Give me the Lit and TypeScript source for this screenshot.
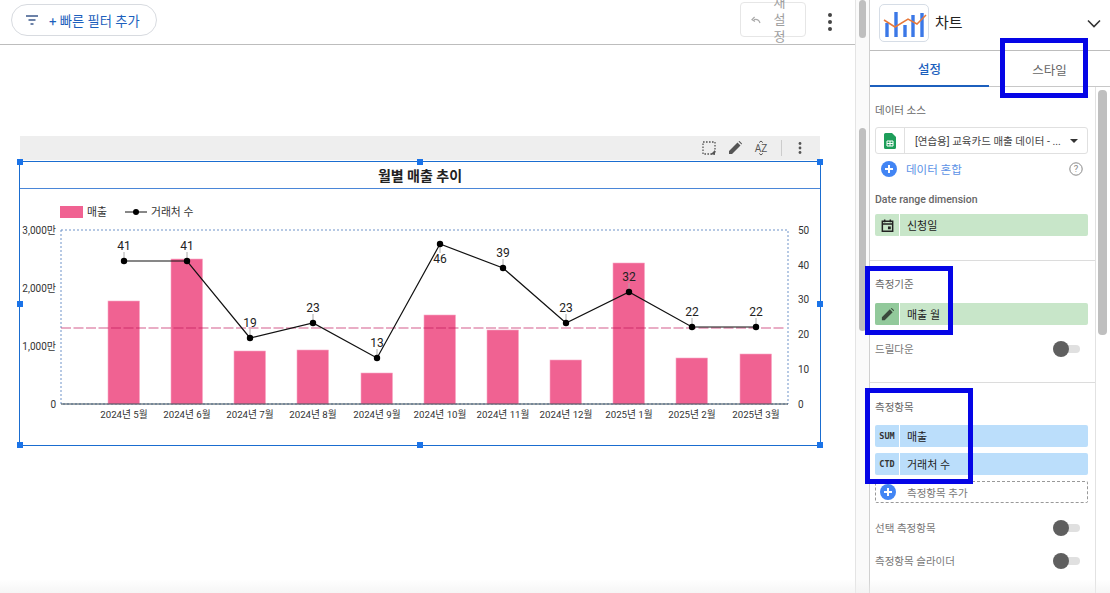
import { LitElement, html, css, svg } from "lit";
import { customElement } from "lit/decorators.js";

const xs = [124, 187, 250, 313, 377, 440, 503, 566, 629, 692, 756];
const tops = [301, 259, 351, 350, 373, 315, 330, 360, 263, 358, 354];
const ys = [261, 261, 338, 323, 358, 244, 268, 323, 292, 327, 327];
const vals = [41, 41, 19, 23, 13, 46, 39, 23, 32, 22, 22];
const months = ["2024년 5월", "2024년 6월", "2024년 7월", "2024년 8월", "2024년 9월", "2024년 10월", "2024년 11월", "2024년 12월", "2025년 1월", "2025년 2월", "2025년 3월"];
const handles = [[0, 0], [50, 0], [100, 0], [0, 50], [100, 50], [0, 100], [50, 100], [100, 100]];

const toggle = html`<span class="toggle"><span class="knob"></span></span>`;

const plus = html`<svg class="plus" viewBox="0 0 16 16"><circle cx="8" cy="8" r="8" fill="#4285f4"></circle><path d="M8 4v8M4 8h8" stroke="#fff" stroke-width="2"></path></svg>`;

@customElement("app-root")
export class AppRoot extends LitElement {
  static styles = css`
    :host { display: block; width: 1110px; height: 593px; overflow: hidden; position: relative; background: #fff;
      font-family: Roboto, "Noto Sans CJK KR", sans-serif; color: #333; }
    .app { display: grid; grid-template-columns: 855px 14px 241px; height: 593px; }
    .main { display: flex; flex-direction: column; min-width: 0; }
    .topbar { height: 44px; box-sizing: content-box; border-bottom: 1px solid #bdbdbd; display: flex; align-items: flex-start; padding-left: 11px; }
    .filter { margin-top: 4px; width: 146px; height: 32px; box-sizing: border-box; border: 1px solid #d8dbe0; border-radius: 16px; display: flex; align-items: center; padding-left: 13px; gap: 10px; color: #1c5fbd; font-size: 13.3px; white-space: nowrap; }
    .filter svg { width: 14px; height: 12px; flex: none; }
    .reset { margin-left: 583px; margin-top: 2px; width: 66px; height: 35px; box-sizing: border-box; border: 1px solid #e6e6e6; border-radius: 4px; display: flex; align-items: center; padding-left: 10px; gap: 12px; color: #9e9e9e; font-size: 13px; line-height: 17px; }
    .reset svg { width: 10px; height: 8px; flex: none; }
    .reset .t { width: 13px; text-align: center; word-break: break-all; }
    .dots { width: 4px; margin-left: 22px; margin-top: 13px; display: flex; flex-direction: column; gap: 3px; }
    .dots i { width: 4px; height: 4px; border-radius: 50%; background: #444; }
    .canvas { flex: 1; padding: 91px 0 0 19px; }
    .tools { margin-left: 1px; width: 800px; height: 24px; box-sizing: border-box; padding-right: 7px; background: #eeeeee; display: flex; align-items: center; justify-content: flex-end; color: #555; }
    .tools .ic { width: 26px; height: 24px; display: flex; align-items: center; justify-content: center; }
    .tools svg { width: 16px; height: 16px; }
    .tools .sep { width: 1px; height: 16px; background: #ccc; margin: 0 5px 0 7px; }
    .chart { position: relative; margin-top: 1px; width: 802px; height: 285px; box-sizing: border-box; border: 1px solid #1a6dd0; }
    .title { height: 27px; box-sizing: border-box; border-bottom: 1px solid #4a86d8; display: flex; align-items: center; justify-content: center; font-size: 14px; font-weight: 700; color: #222; }
    .chart > svg { display: block; width: 800px; height: 256px; }
    .h { position: absolute; width: 6px; height: 6px; background: #1a73e8; transform: translate(-50%, -50%); }
    .gutter { border-left: 1px solid #e4e4e4; background: #fafafa; position: relative; display: flex; flex-direction: column; }
    .thumb { position: absolute; left: 3px; width: 7px; background: #bfbfbf; border-radius: 4px; }
    .t1 { top: 0; height: 38px; }
    .t2 { top: 128px; height: 203px; }
    .panel { border-left: 1px solid #d0d0d0; display: flex; flex-direction: column; min-width: 0; height: 593px; }
    .head { height: 51px; flex: none; box-sizing: border-box; border-bottom: 1px solid #bdbdbd; display: flex; align-items: flex-start; padding: 4px 0 0 9px; }
    .logo { width: 50px; height: 38px; box-sizing: border-box; border: 1px solid #d6dde6; border-radius: 5px; flex: none; }
    .logo svg { display: block; width: 48px; height: 36px; }
    .name { margin-left: 6px; margin-top: 7px; font-size: 15px; color: #222; }
    .chev { margin-left: auto; margin-right: 9px; margin-top: 15px; width: 14px; height: 9px; }
    .tabs { height: 36px; flex: none; box-sizing: border-box; display: grid; grid-template-columns: 119px 1fr; border-bottom: 1px solid #c8c8c8; font-size: 12.5px; }
    .tab { display: flex; align-items: center; justify-content: center; color: #666; }
    .tab.on { color: #1c5fbd; border-bottom: 2px solid #1c5fbd; height: 36px; box-sizing: border-box; font-weight: 500; }
    .scroll { flex: 1; display: grid; grid-template-columns: 226px 1fr; min-height: 0; }
    .body { border-right: 1px solid #e2e2e2; min-width: 0; }
    .rail { position: relative; }
    .rail .thumb { left: 2px; top: 3px; width: 9px; height: 245px; }
    .sec { padding: 0 7px 0 5px; border-bottom: 1px solid #dcdcdc; box-sizing: border-box; }
    .s1 { height: 174px; padding-top: 16px; }
    .s2 { height: 122px; padding-top: 16px; }
    .s3 { border-bottom: 0; padding-top: 17px; }
    .lbl { font-size: 10.5px; line-height: 16px; color: #666; }
    .lbl.en { font-weight: 500; margin-top: 15px; }
    .select { margin-top: 8px; height: 27px; box-sizing: border-box; border: 1px solid #e0e0e0; border-radius: 3px; display: grid; grid-template-columns: 29px 1fr 17px; align-items: center; font-size: 10.5px; color: #444; }
    .sheet { height: 25px; border-right: 1px solid #e0e0e0; display: flex; align-items: center; justify-content: center; }
    .sheet svg { width: 12px; height: 16px; }
    .select .tx { padding-left: 10px; white-space: nowrap; overflow: hidden; }
    .caret { width: 0; height: 0; border-left: 4px solid transparent; border-right: 4px solid transparent; border-top: 4px solid #333; }
    .blend { margin-top: 7px; height: 16px; display: flex; align-items: center; padding-left: 6px; gap: 9px; color: #5c92e6; font-size: 11.5px; }
    .plus { width: 16px; height: 16px; flex: none; }
    .help { margin-left: auto; margin-right: 5px; width: 14px; height: 14px; }
    .chip { height: 22px; display: grid; grid-template-columns: 25px 1fr; border-radius: 2px; overflow: hidden; font-size: 11px; color: #222; align-items: stretch; }
    .chip > span { display: flex; align-items: center; }
    .chip .k { justify-content: center; border-right: 1px solid #fff; }
    .chip .v { padding-left: 7px; }
    .green { background: #c8e6c9; }
    .blue { background: #bbdefb; }
    .k.dark { background: #92c99b; }
    .k svg { width: 15px; height: 15px; }
    .mono { font-family: "DejaVu Sans Mono", monospace; font-size: 8.5px; font-weight: 700; color: #333; }
    .mt6 { margin-top: 6px; }
    .mt9 { margin-top: 9px; }
    .mt10 { margin-top: 10px; }
    .row { display: flex; align-items: center; justify-content: space-between; font-size: 10.5px; color: #777; }
    .r0 { margin-top: 16px; }
    .r1 { margin-top: 17px; }
    .r2 { margin-top: 18px; }
    .toggle { position: relative; width: 27px; height: 8px; background: #e0e0e0; border-radius: 4px; margin-right: 8px; display: block; }
    .knob { position: absolute; left: 0; top: -4px; width: 16px; height: 16px; border-radius: 50%; background: #5f5f5f; }
    .add { margin-top: 6px; height: 22px; box-sizing: border-box; border: 1px dashed #999; border-radius: 2px; display: flex; align-items: center; padding-left: 4px; gap: 11px; font-size: 10.5px; color: #777; }
    .mark { position: absolute; box-sizing: border-box; border: 5px solid #0505e6; pointer-events: none; }
    .fade { position: absolute; left: 0; right: 0; bottom: 0; height: 14px; background: linear-gradient(to bottom, rgba(240,240,240,0), rgba(238,238,238,.55)); pointer-events: none; }
  `;

  private plot() {
    const lbl = `font-family: Roboto, 'Noto Sans CJK KR', sans-serif`;
    return svg`
      <rect x="60" y="206" width="23" height="12" fill="#f06292"></rect>
      <text x="87" y="216" font-size="10.8" fill="#333" style=${lbl}>매출</text>
      <line x1="125" y1="212" x2="147" y2="212" stroke="#111"></line>
      <circle cx="136" cy="212" r="3" fill="#000"></circle>
      <text x="151" y="216" font-size="10.8" fill="#333" style=${lbl}>거래처 수</text>
      <rect x="61" y="230" width="727" height="174" fill="none" stroke="#6f93c9" stroke-dasharray="2 2"></rect>
      ${xs.map((x, i) => svg`<rect x=${x - 16} y=${tops[i]} width="31.5" height=${404 - tops[i]} fill="#f06292" stroke="#f8a9c5" stroke-width=".6"></rect>`)}
      <line x1="61" y1="404" x2="788" y2="404" stroke="#37474f" stroke-width="1"></line>
      <line x1="61" y1="328" x2="786" y2="328" stroke="#c2185b" stroke-opacity=".7" stroke-dasharray="10 2.5" stroke-width="1.2"></line>
      ${[["3,000만", 230], ["2,000만", 288], ["1,000만", 346], ["0", 404]].map(([t, y]) => svg`<text x="56" y=${(y as number) + 3.5} text-anchor="end" font-size="10" fill="#333" style=${lbl}>${t}</text>`)}
      ${[[50, 230], [40, 265], [30, 299], [20, 334], [10, 369], [0, 404]].map(([t, y]) => svg`<text x="798" y=${y + 3.5} font-size="10" fill="#333" style=${lbl}>${t}</text>`)}
      ${xs.map((x, i) => svg`<text x=${x} y="418" text-anchor="middle" font-size="9.7" fill="#333" style=${lbl}>${months[i]}</text>`)}
      ${vals.map((v, i) => i === 5
        ? svg`<line x1=${xs[i]} y1=${ys[i]} x2=${xs[i]} y2=${ys[i] + 9} stroke="#aaa"></line>
              <text x=${xs[i]} y=${ys[i] + 19} text-anchor="middle" font-size="12" fill="#222" style=${lbl}>${v}</text>`
        : svg`<line x1=${xs[i]} y1=${ys[i]} x2=${xs[i]} y2=${ys[i] - 9} stroke="#aaa"></line>
              <text x=${xs[i]} y=${ys[i] - 11} text-anchor="middle" font-size="12" fill="#222" style=${lbl}>${v}</text>`)}
      <polyline points=${xs.map((x, i) => `${x},${ys[i]}`).join(" ")} fill="none" stroke="#111" stroke-width="1.2"></polyline>
      ${xs.map((x, i) => svg`<circle cx=${x} cy=${ys[i]} r="3.2" fill="#000"></circle>`)}
    `;
  }

  render() {
    return html`
      <div class="app">
        <div class="main">
          <div class="topbar">
            <div class="filter">
              <svg viewBox="0 0 14 12"><path d="M1 2h12M3.5 6h7M5.5 10h3" stroke="#3c5a8c" stroke-width="1.5"></path></svg>
              <span>+ 빠른 필터 추가</span>
            </div>
            <div class="reset">
              <svg viewBox="0 0 10 8"><path d="M9 7C8 4 5.5 3 3 3.6M3.6 1L1 3.6l3 2" fill="none" stroke="#aaa" stroke-width="1.2"></path></svg>
              <span class="t">재설정</span>
            </div>
            <div class="dots"><i></i><i></i><i></i></div>
          </div>
          <div class="canvas">
            <div class="tools">
              <span class="ic"><svg viewBox="0 0 16 16"><path d="M2 2h12v12H2z" fill="none" stroke="#555" stroke-width="1.3" stroke-dasharray="1.6 1.4"></path><path d="M9.5 14.5l4.5-4.5v4.5z" fill="#555"></path></svg></span>
              <span class="ic"><svg viewBox="0 0 16 16"><path d="M2 14v-3L10.5 2.5l3 3L5 14zM11.5 1.5l1-.5 2.5 2.5-.5 1z" fill="#555"></path></svg></span>
              <span class="ic"><svg viewBox="0 0 16 16"><path d="M6.2 2.6L8 1l1.8 1.6M6.2 13.4L8 15l1.8-1.6" fill="none" stroke="#555" stroke-width="1"></path><text x="8" y="11.6" text-anchor="middle" font-size="10" fill="#555" font-family="Roboto, sans-serif">AZ</text></svg></span>
              <span class="sep"></span>
              <span class="ic"><svg viewBox="0 0 16 16"><circle cx="8" cy="3.5" r="1.4" fill="#555"></circle><circle cx="8" cy="8" r="1.4" fill="#555"></circle><circle cx="8" cy="12.5" r="1.4" fill="#555"></circle></svg></span>
            </div>
            <div class="chart">
              <div class="title">월별 매출 추이</div>
              <svg viewBox="20 189 800 256">${this.plot()}</svg>
              ${handles.map(([l, t]) => html`<span class="h" style="left:${l}%;top:${t}%"></span>`)}
            </div>
          </div>
        </div>
        <div class="gutter"><span class="thumb t1"></span><span class="thumb t2"></span></div>
        <div class="panel">
          <div class="head">
            <div class="logo">
              <svg viewBox="0 0 48 36">
                <path d="M7 32V18M16 32V7M25 32V20M33 32V10M42 32V8" stroke="#3b78e7" stroke-width="3.4"></path>
                <path d="M4 15l11 7 13-8 9 5 9-9" fill="none" stroke="#e8793a" stroke-width="1.5"></path>
              </svg>
            </div>
            <span class="name">차트</span>
            <svg class="chev" viewBox="0 0 14 9"><path d="M1 1.5l6 6 6-6" fill="none" stroke="#333" stroke-width="1.6"></path></svg>
          </div>
          <div class="tabs"><span class="tab on">설정</span><span class="tab">스타일</span></div>
          <div class="scroll">
            <div class="body">
              <div class="sec s1">
                <div class="lbl">데이터 소스</div>
                <div class="select">
                  <span class="sheet"><svg viewBox="0 0 12 16"><path d="M0 1.5A1.5 1.5 0 0 1 1.5 0H8l4 4v10.5a1.5 1.5 0 0 1-1.5 1.5h-9A1.5 1.5 0 0 1 0 14.5z" fill="#1e9e5a"></path><path d="M3 8h6v5H3zM3 10.5h6M6 8v5" fill="none" stroke="#fff"></path></svg></span>
                  <span class="tx">[연습용] 교육카드 매출 데이터 - ...</span>
                  <span class="caret"></span>
                </div>
                <div class="blend">${plus}<span>데이터 혼합</span>
                  <svg class="help" viewBox="0 0 14 14"><circle cx="7" cy="7" r="6.2" fill="none" stroke="#888"></circle><text x="7" y="10.4" text-anchor="middle" font-size="9.5" fill="#888" font-family="Roboto, sans-serif">?</text></svg>
                </div>
                <div class="lbl en">Date range dimension</div>
                <div class="chip green mt6"><span class="k"><svg viewBox="0 0 16 16"><path d="M2.5 3.5h11v10.5h-11zM2.5 6.5h11M5 1.5v3M11 1.5v3" fill="none" stroke="#222" stroke-width="1.6"></path><rect x="8.5" y="9" width="3" height="3" fill="#222"></rect></svg></span><span class="v">신청일</span></div>
              </div>
              <div class="sec s2">
                <div class="lbl">측정기준</div>
                <div class="chip green mt10"><span class="k dark"><svg viewBox="0 0 16 16"><path d="M2 14v-3L10.5 2.5l3 3L5 14zM11.5 1.5l1-.5 2.5 2.5-.5 1z" fill="#3a4a3c"></path></svg></span><span class="v">매출 월</span></div>
                <div class="row r0">드릴다운 ${toggle}</div>
              </div>
              <div class="sec s3">
                <div class="lbl">측정항목</div>
                <div class="chip blue mt9"><span class="k mono">SUM</span><span class="v">매출</span></div>
                <div class="chip blue mt6"><span class="k mono">CTD</span><span class="v">거래처 수</span></div>
                <div class="add">${plus}<span>측정항목 추가</span></div>
                <div class="row r1">선택 측정항목 ${toggle}</div>
                <div class="row r2">측정항목 슬라이더 ${toggle}</div>
              </div>
            </div>
            <div class="rail"><span class="thumb"></span></div>
          </div>
        </div>
      </div>
      <div class="mark" style="left:1000px;top:38px;width:88px;height:60px"></div>
      <div class="mark" style="left:865px;top:266px;width:88px;height:69px"></div>
      <div class="mark" style="left:865px;top:388px;width:108px;height:96px"></div>
      <div class="fade"></div>
    `;
  }
}
